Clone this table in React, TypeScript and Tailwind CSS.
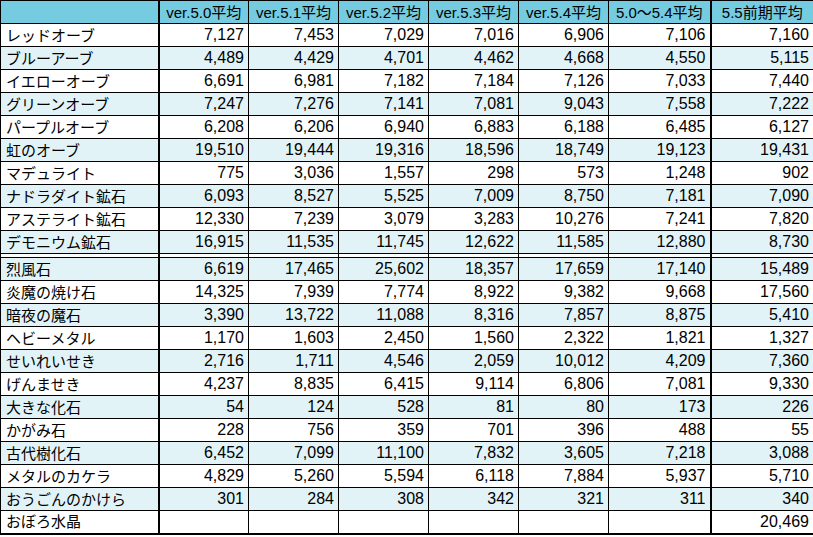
const headers = [
  "ver.5.0平均",
  "ver.5.1平均",
  "ver.5.2平均",
  "ver.5.3平均",
  "ver.5.4平均",
  "5.0〜5.4平均",
  "5.5前期平均",
];

type Row = { name: string; values: string[] };

const groupA: Row[] = [
  { name: "レッドオーブ", values: ["7,127", "7,453", "7,029", "7,016", "6,906", "7,106", "7,160"] },
  { name: "ブルーアーブ", values: ["4,489", "4,429", "4,701", "4,462", "4,668", "4,550", "5,115"] },
  { name: "イエローオーブ", values: ["6,691", "6,981", "7,182", "7,184", "7,126", "7,033", "7,440"] },
  { name: "グリーンオーブ", values: ["7,247", "7,276", "7,141", "7,081", "9,043", "7,558", "7,222"] },
  { name: "パープルオーブ", values: ["6,208", "6,206", "6,940", "6,883", "6,188", "6,485", "6,127"] },
  { name: "虹のオーブ", values: ["19,510", "19,444", "19,316", "18,596", "18,749", "19,123", "19,431"] },
  { name: "マデュライト", values: ["775", "3,036", "1,557", "298", "573", "1,248", "902"] },
  { name: "ナドラダイト鉱石", values: ["6,093", "8,527", "5,525", "7,009", "8,750", "7,181", "7,090"] },
  { name: "アステライト鉱石", values: ["12,330", "7,239", "3,079", "3,283", "10,276", "7,241", "7,820"] },
  { name: "デモニウム鉱石", values: ["16,915", "11,535", "11,745", "12,622", "11,585", "12,880", "8,730"] },
];

const groupB: Row[] = [
  { name: "烈風石", values: ["6,619", "17,465", "25,602", "18,357", "17,659", "17,140", "15,489"] },
  { name: "炎魔の焼け石", values: ["14,325", "7,939", "7,774", "8,922", "9,382", "9,668", "17,560"] },
  { name: "暗夜の魔石", values: ["3,390", "13,722", "11,088", "8,316", "7,857", "8,875", "5,410"] },
  { name: "ヘビーメタル", values: ["1,170", "1,603", "2,450", "1,560", "2,322", "1,821", "1,327"] },
  { name: "せいれいせき", values: ["2,716", "1,711", "4,546", "2,059", "10,012", "4,209", "7,360"] },
  { name: "げんませき", values: ["4,237", "8,835", "6,415", "9,114", "6,806", "7,081", "9,330"] },
  { name: "大きな化石", values: ["54", "124", "528", "81", "80", "173", "226"] },
  { name: "かがみ石", values: ["228", "756", "359", "701", "396", "488", "55"] },
  { name: "古代樹化石", values: ["6,452", "7,099", "11,100", "7,832", "3,605", "7,218", "3,088"] },
  { name: "メタルのカケラ", values: ["4,829", "5,260", "5,594", "6,118", "7,884", "5,937", "5,710"] },
  { name: "おうごんのかけら", values: ["301", "284", "308", "342", "321", "311", "340"] },
  { name: "おぼろ水晶", values: ["", "", "", "", "", "", "20,469"] },
];

// thick rule after the "5.0〜5.4平均" column
const cellBorder = (j: number) => (j === 5 ? "border-r-2" : "border-r");

const DataRow = ({ row, shaded }: { row: Row; shaded: boolean }) => (
  <tr className={shaded ? "bg-[#e2f3f8]" : "bg-white"}>
    <td className="h-[23px] border-b border-r-2 border-black px-[5px] text-left text-[15px] leading-none">
      {row.name}
    </td>
    {row.values.map((v, j) => (
      <td
        key={j}
        className={`h-[23px] border-b ${cellBorder(j)} border-black px-[4px] text-right text-[16px] leading-none`}
      >
        {v}
      </td>
    ))}
  </tr>
);

export default function App() {
  return (
    <div className="w-[813px] bg-white font-['Liberation_Sans','Noto_Sans_CJK_JP',sans-serif] text-black">
      <table className="w-[813px] table-fixed border-collapse border-l border-t border-b-2 border-black">
        <colgroup>
          <col className="w-[158px]" />
          <col className="w-[90px]" />
          <col className="w-[90px]" />
          <col className="w-[90px]" />
          <col className="w-[90px]" />
          <col className="w-[90px]" />
          <col className="w-[102px]" />
          <col className="w-[103px]" />
        </colgroup>
        <thead>
          <tr className="bg-[#75cbe0]">
            <th className="h-[23px] border-b border-r-2 border-black" />
            {headers.map((h, j) => (
              <th
                key={j}
                className={`h-[23px] border-b ${cellBorder(j)} border-black text-center text-[15px] font-normal leading-none`}
              >
                {h}
              </th>
            ))}
          </tr>
        </thead>
        <tbody>
          {groupA.map((r, i) => (
            <DataRow key={r.name} row={r} shaded={i % 2 === 1} />
          ))}
          {/* spacer between the two groups */}
          <tr className="bg-white">
            <td className="h-[4px] border-b border-r-2 border-black p-0" />
            {headers.map((_, j) => (
              <td key={j} className={`h-[4px] border-b ${cellBorder(j)} border-black p-0`} />
            ))}
          </tr>
          {groupB.map((r, i) => (
            <DataRow key={r.name} row={r} shaded={i % 2 === 0} />
          ))}
        </tbody>
      </table>
    </div>
  );
}
